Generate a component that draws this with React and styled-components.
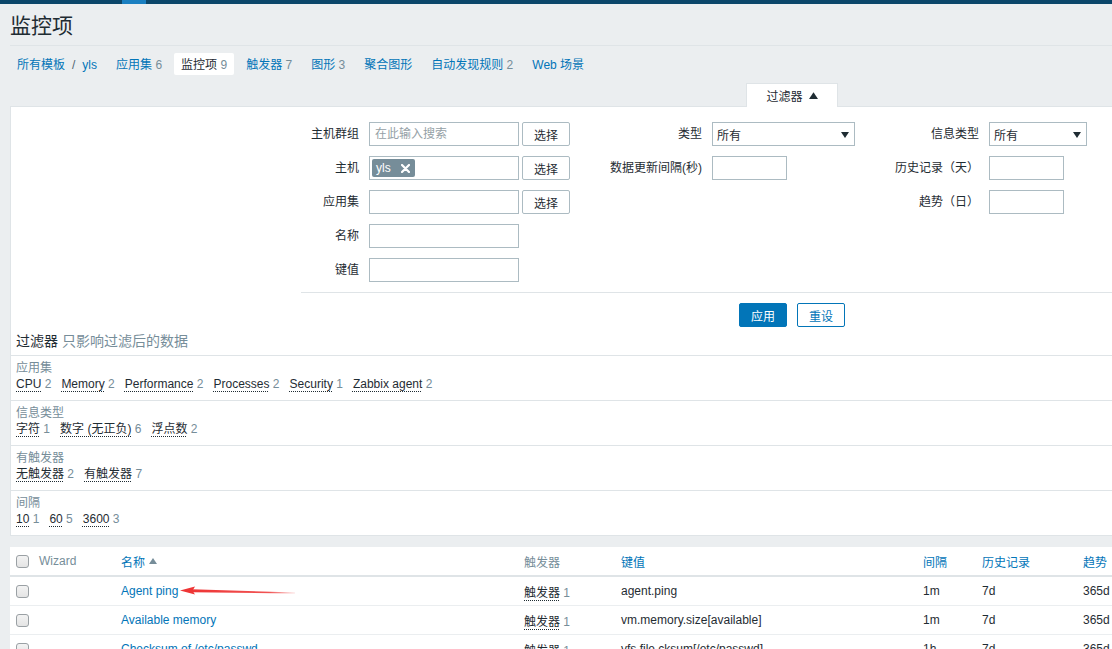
import React from "react";
import styled, { createGlobalStyle } from "styled-components";

const GlobalStyle = createGlobalStyle`
  html, body { margin: 0; padding: 0; background: #ebeef0; overflow: hidden; }
  body {
    font-family: "Liberation Sans", "Noto Sans CJK SC", Arial, sans-serif;
    font-size: 12px;
    color: #1f2c33;
  }
  * { box-sizing: border-box; }
`;

const TopBar = styled.div`
  height: 4px;
  background: #0b466a;
  display: flex;
`;
const TopBarAccent = styled.div`
  margin-left: 122px;
  width: 24px;
  background: #1a7fc1;
`;

const Page = styled.div`
  width: 1290px;
  padding-left: 10px;
`;

const Header = styled.header`
  border-bottom: 1px solid #dfe4e7;
  padding: 9px 0 6px;
`;
const Title = styled.h1`
  margin: 0;
  font-size: 21px;
  line-height: 26px;
  font-weight: normal;
  color: #1f2c33;
`;

const Nav = styled.nav`
  display: flex;
  gap: 5px;
  margin-top: 7px;
  height: 22px;
`;
const NavItem = styled.div`
  line-height: 22px;
  height: 22px;
  padding: 1px 7px 0;
  white-space: nowrap;
  border-radius: 2px;
  background: ${(p) => (p.$active ? "#ffffff" : "transparent")};
`;
const NavLink = styled.span`
  color: ${(p) => (p.$active ? "#1f2c33" : "#0275b8")};
`;
const Gray = styled.span`
  color: #768d99;
`;
const Sep = styled.span`
  color: #4f6470;
  margin: 0 7px;
`;

const FilterTabs = styled.div`
  display: flex;
  margin-top: 8px;
  padding-left: 736px;
`;
const FilterTab = styled.div`
  position: relative;
  width: 92px;
  height: 24px;
  margin-bottom: -1px;
  background: #fff;
  border: 1px solid #dfe4e7;
  border-bottom: none;
  display: flex;
  align-items: center;
  justify-content: center;
  gap: 6px;
  color: #1f2c33;
`;

const Panel = styled.section`
  background: #fff;
  border: 1px solid #dfe4e7;
`;

const FormArea = styled.div`
  margin-left: 290px;
  padding: 15px 0 10px;
  border-bottom: 1px solid #dfe4e7;
  display: grid;
  grid-template-columns: 58px 221px 102px 148px 109px 1fr;
  grid-auto-rows: 24px;
  gap: 10px;
`;
const FormLabel = styled.label`
  grid-column: ${(p) => p.$col || "auto"};
  text-align: right;
  line-height: 25px;
  white-space: nowrap;
  color: #1f2c33;
`;
const FieldGroup = styled.div`
  display: flex;
  gap: 3px;
`;
const TextInput = styled.input`
  width: ${(p) => p.$w}px;
  height: 24px;
  border: 1px solid #acbbc2;
  padding: 0 5px;
  font: inherit;
  color: #1f2c33;
  background: #fff;
  outline: none;
  &::placeholder { color: #959fa6; }
`;
const PickButton = styled.button`
  width: 48px;
  height: 24px;
  border: 1px solid #acbbc2;
  border-radius: 2px;
  background: #fff;
  font: inherit;
  color: #1f2c33;
  padding: 0;
`;
const SelectBox = styled.div`
  width: ${(p) => p.$w}px;
  height: 24px;
  border: 1px solid #acbbc2;
  padding: 1px 5px 0 4px;
  display: flex;
  align-items: center;
  justify-content: space-between;
  background: #fff;
`;
const MultiSelect = styled.div`
  width: 150px;
  height: 24px;
  border: 1px solid #acbbc2;
  padding: 0 2px;
  display: flex;
  align-items: center;
`;
const Tag = styled.span`
  display: inline-flex;
  align-items: center;
  gap: 10px;
  height: 18px;
  padding: 0 5px 0 4px;
  border-radius: 2px;
  background: #768d99;
  color: #fff;
`;

const FormButtons = styled.div`
  display: flex;
  gap: 10px;
  padding: 10px 0 0 728px;
`;
const ActionButton = styled.button`
  width: 48px;
  height: 24px;
  padding: 0;
  border-radius: 2px;
  font: inherit;
  border: 1px solid #0275b8;
  background: ${(p) => (p.$primary ? "#0275b8" : "#fff")};
  color: ${(p) => (p.$primary ? "#fff" : "#0275b8")};
`;

const SubfilterHead = styled.div`
  padding: 6px 5px;
  line-height: 16px;
  font-size: 14px;
`;
const Section = styled.div`
  border-top: 1px solid #dfe4e7;
  padding: 4px 5px 7px;
`;
const SectionTitle = styled.div`
  line-height: 16px;
  color: #768d99;
`;
const SectionItems = styled.div`
  display: flex;
  gap: 10px;
  line-height: 17px;
`;
const Dotted = styled.span`
  color: #1f2c33;
  text-decoration: underline dotted #1f2c33;
  text-underline-offset: 3px;
  text-decoration-thickness: 1px;
`;

const Table = styled.div`
  margin-top: 11px;
  background: #fff;
  width: 1147px;
`;
const Row = styled.div`
  display: grid;
  grid-template-columns: 23px 82px 403px 97px 302px 59px 101px 80px;
  height: ${(p) => (p.$head ? 30 : 29)}px;
  border-bottom: ${(p) => (p.$head ? "2px solid #dfe4e7" : "1px solid #ebeef0")};
`;
const Cell = styled.div`
  position: relative;
  padding-left: 6px;
  display: flex;
  align-items: center;
  gap: 4px;
  white-space: nowrap;
  color: ${(p) => (p.$tone === "link" ? "#0275b8" : p.$tone === "gray" ? "#768d99" : "#1f2c33")};
`;
const Check = styled.span`
  display: inline-block;
  width: 13px;
  height: 13px;
  border: 1px solid #9aa0a4;
  border-radius: 3px;
  background: linear-gradient(#f3f3f3, #e4e4e4);
`;
const ArrowMark = styled.svg`
  position: absolute;
  left: 64px;
  top: 8px;
`;

const Caret = ({ up, color = "#1f2c33", w = 8, h = 6 }) => (
  <svg width={w} height={h} viewBox="0 0 8 6">
    {up ? <path d="M0 6 L4 0 L8 6 Z" fill={color} /> : <path d="M0 0 L8 0 L4 6 Z" fill={color} />}
  </svg>
);

const Cross = () => (
  <svg width="9" height="9" viewBox="0 0 9 9">
    <path d="M1 1 L8 8 M8 1 L1 8" stroke="#fff" strokeWidth="2.2" strokeLinecap="round" />
  </svg>
);

const navItems = [
  { name: "应用集", count: 6 },
  { name: "监控项", count: 9, active: true },
  { name: "触发器", count: 7 },
  { name: "图形", count: 3 },
  { name: "聚合图形" },
  { name: "自动发现规则", count: 2 },
  { name: "Web 场景" },
];

const subfilters = [
  { title: "应用集", items: [["CPU", 2], ["Memory", 2], ["Performance", 2], ["Processes", 2], ["Security", 1], ["Zabbix agent", 2]] },
  { title: "信息类型", items: [["字符", 1], ["数字 (无正负)", 6], ["浮点数", 2]] },
  { title: "有触发器", items: [["无触发器", 2], ["有触发器", 7]] },
  { title: "间隔", items: [["10", 1], ["60", 5], ["3600", 3]] },
];

const rows = [
  { name: "Agent ping", key: "agent.ping", interval: "1m", arrow: true },
  { name: "Available memory", key: "vm.memory.size[available]", interval: "1m" },
  { name: "Checksum of /etc/passwd", key: "vfs.file.cksum[/etc/passwd]", interval: "1h" },
  { name: "Context switches per second", key: "system.cpu.switches", interval: "1m" },
];

export default function App() {
  return (
    <>
      <GlobalStyle />
      <TopBar>
        <TopBarAccent />
      </TopBar>
      <Page>
        <Header>
          <Title>监控项</Title>
        </Header>
        <Nav>
          <NavItem>
            <NavLink>所有模板</NavLink>
            <Sep>/</Sep>
            <NavLink>yls</NavLink>
          </NavItem>
          {navItems.map((n) => (
            <NavItem key={n.name} $active={n.active}>
              <NavLink $active={n.active}>{n.name}</NavLink>
              {n.count !== undefined && <Gray> {n.count}</Gray>}
            </NavItem>
          ))}
        </Nav>
        <FilterTabs>
          <FilterTab>
            过滤器 <Caret up w={9} h={7} />
          </FilterTab>
        </FilterTabs>
        <Panel>
          <FormArea>
            <FormLabel $col={1}>主机群组</FormLabel>
            <FieldGroup>
              <TextInput $w={150} placeholder="在此输入搜索" />
              <PickButton>选择</PickButton>
            </FieldGroup>
            <FormLabel>类型</FormLabel>
            <SelectBox $w={143}>
              <span>所有</span>
              <Caret />
            </SelectBox>
            <FormLabel>信息类型</FormLabel>
            <SelectBox $w={98}>
              <span>所有</span>
              <Caret />
            </SelectBox>

            <FormLabel $col={1}>主机</FormLabel>
            <FieldGroup>
              <MultiSelect>
                <Tag>
                  yls <Cross />
                </Tag>
              </MultiSelect>
              <PickButton>选择</PickButton>
            </FieldGroup>
            <FormLabel>数据更新间隔(秒)</FormLabel>
            <FieldGroup>
              <TextInput $w={75} />
            </FieldGroup>
            <FormLabel>历史记录（天）</FormLabel>
            <FieldGroup>
              <TextInput $w={75} />
            </FieldGroup>

            <FormLabel $col={1}>应用集</FormLabel>
            <FieldGroup>
              <TextInput $w={150} />
              <PickButton>选择</PickButton>
            </FieldGroup>
            <FormLabel $col={5}>趋势（日）</FormLabel>
            <FieldGroup>
              <TextInput $w={75} />
            </FieldGroup>

            <FormLabel $col={1}>名称</FormLabel>
            <FieldGroup>
              <TextInput $w={150} />
            </FieldGroup>

            <FormLabel $col={1}>键值</FormLabel>
            <FieldGroup>
              <TextInput $w={150} />
            </FieldGroup>
          </FormArea>
          <FormButtons>
            <ActionButton $primary>应用</ActionButton>
            <ActionButton>重设</ActionButton>
          </FormButtons>
          <SubfilterHead>
            过滤器 <Gray>只影响过滤后的数据</Gray>
          </SubfilterHead>
          {subfilters.map((s) => (
            <Section key={s.title}>
              <SectionTitle>{s.title}</SectionTitle>
              <SectionItems>
                {s.items.map(([label, count]) => (
                  <span key={label}>
                    <Dotted>{label}</Dotted> <Gray>{count}</Gray>
                  </span>
                ))}
              </SectionItems>
            </Section>
          ))}
        </Panel>
        <Table>
          <Row $head>
            <Cell>
              <Check />
            </Cell>
            <Cell $tone="gray">Wizard</Cell>
            <Cell $tone="link">
              名称 <Caret up color="#768d99" w={8} h={6} />
            </Cell>
            <Cell $tone="gray">触发器</Cell>
            <Cell $tone="link">键值</Cell>
            <Cell $tone="link">间隔</Cell>
            <Cell $tone="link">历史记录</Cell>
            <Cell $tone="link">趋势</Cell>
          </Row>
          {rows.map((r) => (
            <Row key={r.name}>
              <Cell>
                <Check />
              </Cell>
              <Cell />
              <Cell $tone="link">
                {r.name}
                {r.arrow && (
                  <ArrowMark width="120" height="12" viewBox="0 0 120 12">
                    <defs>
                      <linearGradient id="fade" x1="0" x2="1" y1="0" y2="0">
                        <stop offset="0" stopColor="#ee3535" stopOpacity="1" />
                        <stop offset="0.75" stopColor="#ee3535" stopOpacity="0.85" />
                        <stop offset="1" stopColor="#ee3535" stopOpacity="0.15" />
                      </linearGradient>
                    </defs>
                    <path d="M1 5.5 L16 1.5 L13.5 5.8 L16 9.6 Z" fill="#ee3535" />
                    <path d="M13 4.3 L116 7.4 L116 8.4 L13 7.3 Z" fill="url(#fade)" />
                  </ArrowMark>
                )}
              </Cell>
              <Cell>
                <span>
                  <Dotted>触发器</Dotted> <Gray>1</Gray>
                </span>
              </Cell>
              <Cell>{r.key}</Cell>
              <Cell>{r.interval}</Cell>
              <Cell>7d</Cell>
              <Cell>365d</Cell>
            </Row>
          ))}
        </Table>
      </Page>
    </>
  );
}
